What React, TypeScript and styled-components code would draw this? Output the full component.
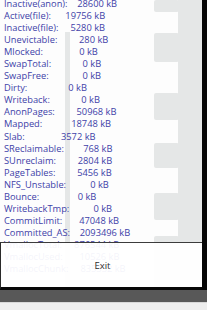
import React from 'react';
import styled, { createGlobalStyle } from 'styled-components';

const GlobalStyle = createGlobalStyle`
  html, body {
    margin: 0;
    padding: 0;
    background: #000;
  }
  body {
    width: 207px;
    height: 310px;
    overflow: hidden;
  }
`;

// /proc/meminfo lines, as the kernel pads them: label to 16, value to 8
const memInfo: [string, number][] = [
  ['Inactive(anon):', 28600],
  ['Active(file):', 19756],
  ['Inactive(file):', 5280],
  ['Unevictable:', 280],
  ['Mlocked:', 0],
  ['SwapTotal:', 0],
  ['SwapFree:', 0],
  ['Dirty:', 0],
  ['Writeback:', 0],
  ['AnonPages:', 50968],
  ['Mapped:', 18748],
  ['Slab:', 3572],
  ['SReclaimable:', 768],
  ['SUnreclaim:', 2804],
  ['PageTables:', 5456],
  ['NFS_Unstable:', 0],
  ['Bounce:', 0],
  ['WritebackTmp:', 0],
  ['CommitLimit:', 47048],
  ['Committed_AS:', 2093496],
  ['VmallocTotal:', 876544],
  ['VmallocUsed:', 10526],
  ['VmallocChunk:', 835332],
];

const formatLine = (label: string, value: number) =>
  label.padEnd(16) + String(value).padStart(8) + ' kB';

const Screen = styled.div`
  position: relative;
  width: 207px;
  height: 310px;
  display: flex;
  flex-direction: column;
  overflow: hidden;
  background: #000;
`;

const Main = styled.div`
  display: flex;
  height: 290px;
`;

const ListPane = styled.div`
  position: relative;
  width: 202px;
  background: #fdfdfd;
  overflow: hidden;
`;

const Edge = styled.div`
  flex: 1;
  background: #060606;
`;

const Watermark = styled.svg`
  position: absolute;
  top: 0;
  left: 0;
`;

const MemList = styled.div`
  position: relative;
  margin-top: -2px;
  padding-left: 4px;
  font-family: 'Open Sans', 'Noto Sans', sans-serif;
  font-size: 9.3px;
  line-height: 12.05px;
  color: #4041a8;
`;

const MemRow = styled.div`
  height: 12.05px;
  white-space: pre;
`;

const Dialog = styled.div`
  position: absolute;
  top: 242px;
  left: 0;
  width: 202px;
  height: 48px;
  box-sizing: border-box;
  display: flex;
  align-items: center;
  justify-content: center;
  border-top: 1px solid #3c3c3c;
  border-left: 1px solid #2a2a2a;
  border-bottom: 3px solid #080808;
  background: rgba(255, 255, 255, 0.94);
`;

const ExitLabel = styled.span`
  font-family: 'Open Sans', 'Noto Sans', sans-serif;
  font-size: 9.5px;
  color: #2e2e2e;
  margin-left: 2px;
`;

const GreyBar = styled.div`
  height: 12px;
  background: #585858;
`;

const Foot = styled.div`
  flex: 1;
  background: #eeeeee;
  border-top: 1px solid #d8d8d8;
`;

export default function App() {
  return (
    <>
      <GlobalStyle />
      <Screen>
        <Main>
          <ListPane>
            <Watermark width="202" height="290" viewBox="0 0 202 290">
              <g fill="#e5e7e7">
                <rect x="65" y="32" width="5" height="258" />
                <rect x="178" y="0" width="24" height="290" />
                <rect x="154" y="0" width="25" height="12" rx="2" />
                <rect x="154" y="33" width="25" height="29" rx="2" />
                <rect x="154" y="93" width="25" height="27" rx="2" />
                <rect x="154" y="143" width="25" height="25" rx="2" />
                <rect x="154" y="193" width="25" height="27" rx="2" />
                <rect x="154" y="236" width="25" height="54" rx="2" />
              </g>
            </Watermark>
            <MemList>
              {memInfo.map(([label, value]) => (
                <MemRow key={label}>{formatLine(label, value)}</MemRow>
              ))}
            </MemList>
          </ListPane>
          <Edge />
        </Main>
        <GreyBar />
        <Foot />
        <Dialog>
          <ExitLabel>Exit</ExitLabel>
        </Dialog>
      </Screen>
    </>
  );
}
